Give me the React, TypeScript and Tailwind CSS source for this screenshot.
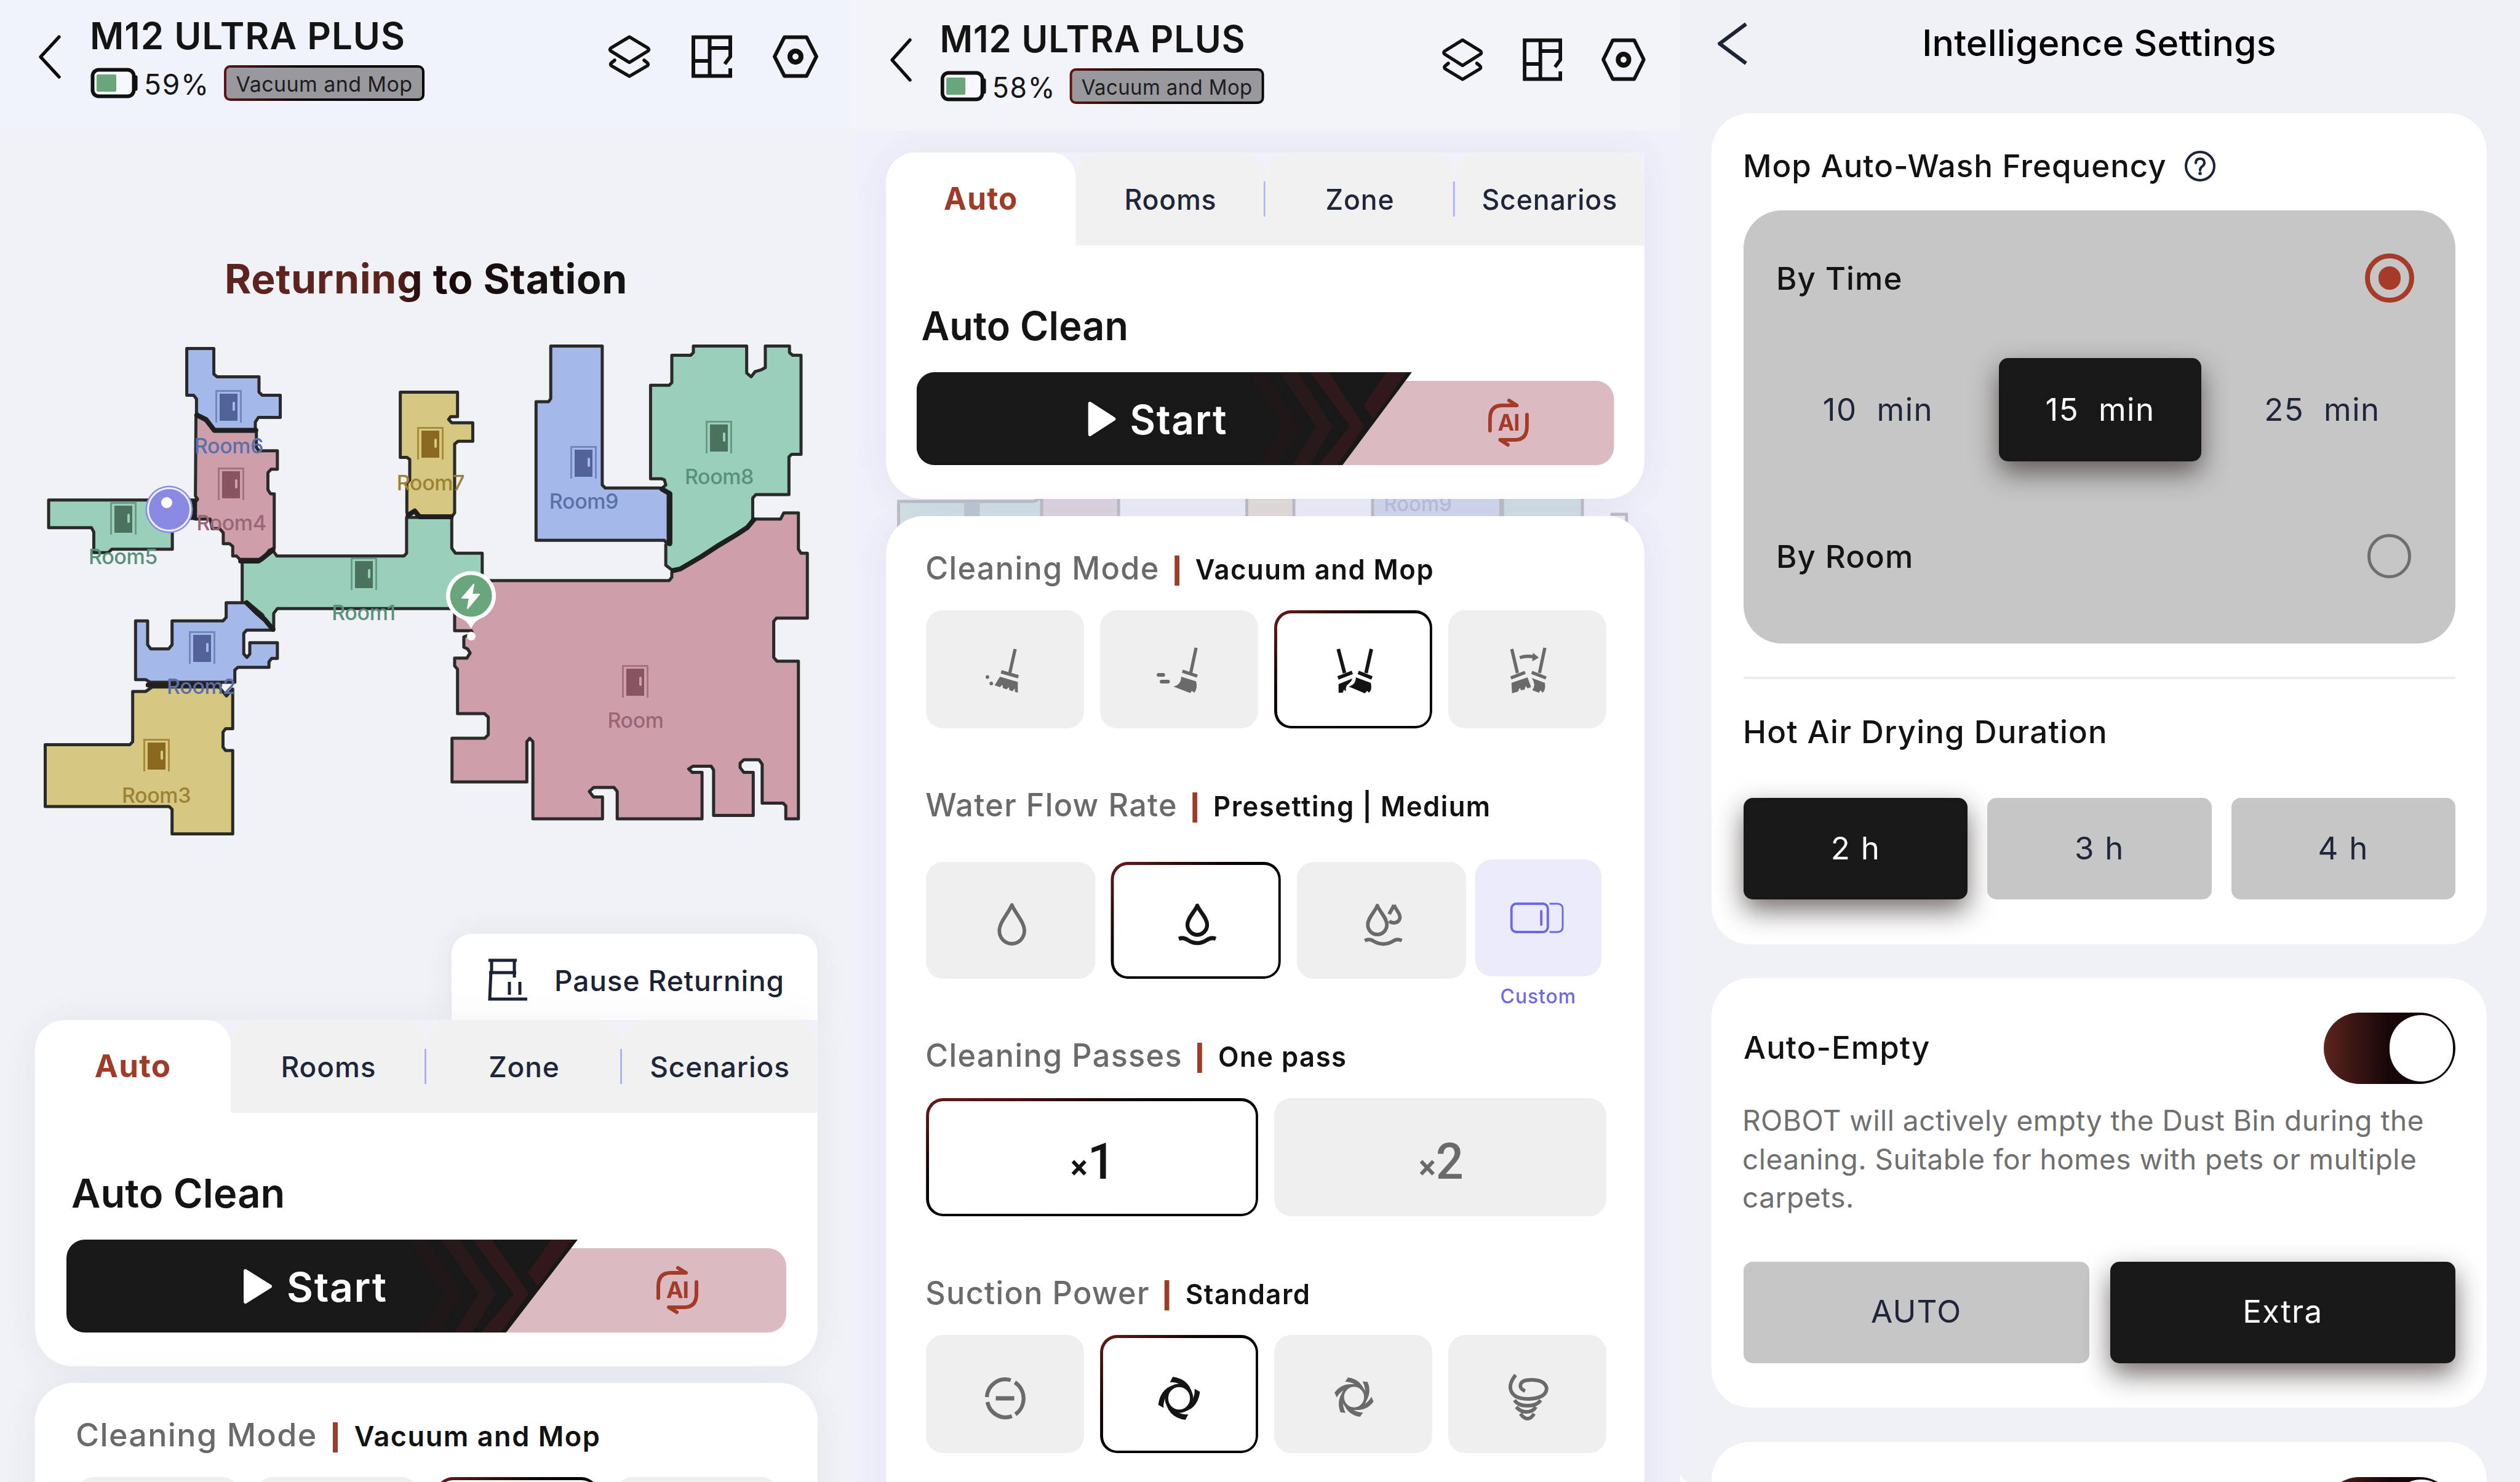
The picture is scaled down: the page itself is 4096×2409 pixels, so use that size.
import type { ReactNode } from 'react'

const COLORS = {
  blue: { fill: '#a4b9e9', frame: '#7188bf', door: '#52639a', text: '#5b6fa9' },
  pink: { fill: '#ce9fab', frame: '#a57380', door: '#87545f', text: '#9a6577' },
  green: { fill: '#99cfbb', frame: '#6a9a86', door: '#4a725d', text: '#58917a' },
  yellow: { fill: '#d7c881', frame: '#a88c3c', door: '#8a6a20', text: '#9c8233' },
}

type RoomColor = keyof typeof COLORS

// Outlines are in raw map units, labels in screen pixels
const rooms: { color: RoomColor; d: string }[] = [
  { color: 'pink', d: 'M652 275L690 292L722 322H882V370L892 380H962V434H938L926 444V494L936 506H950V665L930 672L905 698H820L806 688H792V660L780 652H756V620L742 608H714L706 580H650V530L658 522L650 512Z' },
  { color: 'blue', d: 'M617 80H720V155L732 163H892V208L904 217H973V282H890L878 296V318H722L705 300L660 275L654 268V228L643 217H617Z' },
  { color: 'green', d: 'M91 524H650V578H562V668H332L318 678H263V618L254 605H91Z' },
  { color: 'green', d: 'M828 703H890L905 695L945 672L960 688H1444L1454 680V575H1626V665L1640 680H1742V745L1636 842H962L948 856V905L930 895L905 860L850 825H828Z' },
  { color: 'yellow', d: 'M1430 208H1648V280L1622 280L1614 288L1626 298H1706V352H1650L1637 360V562L1624 575H1505L1485 555L1460 570L1455 560V475L1466 465V405L1455 399H1430Z' },
  { color: 'blue', d: 'M2003 73H2199V480L2211 489H2420L2450 505V655L2435 642H1947V236H1995L2003 227Z' },
  { color: 'green', d: 'M2383 188H2454L2464 180V100H2536L2546 92V73H2749V152L2766 163L2781 148L2806 142L2820 136V73H2912V92L2924 100H2956V390H2920L2910 398V508H2784L2772 518V580L2751 605L2696 630L2646 655L2576 690L2496 728L2466 730L2441 715V655L2460 650V505L2426 490L2441 480L2436 465L2426 462H2383Z' },
  { color: 'pink', d: 'M1742 760H2454L2464 750V735L2496 728L2576 690L2646 655L2751 605L2776 580H2878L2890 562H2946V668L2956 680H2980V870H2862L2852 880V985L2864 996H2946V1458H2898V1420L2888 1412H2808V1298L2796 1285H2738L2724 1295V1308L2738 1322H2774V1448H2623V1315L2614 1304H2544L2528 1312L2542 1322H2579V1458H2256V1378L2244 1366H2166L2150 1378L2166 1394H2200V1458H1935V1232L1923 1222L1912 1232V1350H1627V1222H1751L1765 1212V1160L1751 1150H1648V1020L1637 1010V987H1684L1696 972L1686 960L1672 955V925L1706 915L1701 907H1637V842Z' },
  { color: 'blue', d: 'M422 878H468V948L480 960H548L561 948V878H755L767 868V825H845L900 860L945 905H845L834 915V975L846 985L857 975V942H962V988H940L930 998V1014H812L800 1022V1058H478L460 1050H422Z' },
  { color: 'yellow', d: 'M485 1072H740L768 1098L792 1078V1194H765L755 1204V1248L765 1258H792V1502H561V1430L550 1422H78V1241H400L411 1232V1085H460Z' },
]

const walls = [
  'M655 275L690 288L722 320H880',
  'M646 528V576',
  'M822 703H890L905 695L945 670',
  'M845 825L885 855L915 875L945 903',
  'M1460 568L1485 556L1503 573H1624',
  'M2426 492L2456 505V652',
  'M2470 730L2496 726L2576 690L2646 655L2711 625L2751 605L2776 582',
  'M470 1066H742',
]

const labels: { name: string; color: RoomColor; door: [number, number]; text: [number, number] }[] = [
  { name: 'Room6', color: 'blue', door: [350, 112], text: [372, 215] },
  { name: 'Room4', color: 'pink', door: [354, 238], text: [376, 340] },
  { name: 'Room5', color: 'green', door: [179, 294], text: [200, 395] },
  { name: 'Room1', color: 'green', door: [570, 384], text: [591, 486] },
  { name: 'Room2', color: 'blue', door: [307, 504], text: [327, 606] },
  { name: 'Room3', color: 'yellow', door: [233, 679], text: [254, 783] },
  { name: 'Room7', color: 'yellow', door: [678, 172], text: [700, 275] },
  { name: 'Room9', color: 'blue', door: [927, 203], text: [949, 305] },
  { name: 'Room8', color: 'green', door: [1147, 162], text: [1169, 265] },
  { name: 'Room', color: 'pink', door: [1011, 559], text: [1033, 661] },
]

function FloorMap() {
  return (
    <svg className="block h-[996px] w-[1385px] shrink-0 mt-[33px]" viewBox="0 0 1385 996">
      <g transform="translate(40.2 0) scale(0.42686 0.55489)" strokeLinejoin="round" strokeLinecap="round" fill="none">
        {rooms.map((room) => (
          <path key={room.d} d={room.d} fill={COLORS[room.color].fill} stroke="#2a2a2a" strokeWidth="5" vectorEffect="non-scaling-stroke" />
        ))}
        {walls.map((d) => (
          <path key={d} d={d} stroke="#1f1f1f" strokeWidth="8" vectorEffect="non-scaling-stroke" />
        ))}
      </g>
      {labels.map(({ name, color, door: [dx, dy], text: [tx, ty] }) => (
        <g key={name}>
          <path d={`M${dx + 1.5} ${dy + 53}V${dy + 1.5}H${dx + 41.5}V${dy + 53}`} fill="none" stroke={COLORS[color].frame} strokeWidth="3" />
          <rect x={dx + 7} y={dy + 6} width="29" height="44" fill={COLORS[color].door} />
          <rect x={dx + 28} y={dy + 19} width="4" height="15" rx="2" fill={COLORS[color].fill} />
          <text x={tx} y={ty} fill={COLORS[color].text} textAnchor="middle" className="font-['Inter'] text-[34px] font-medium tracking-[-0.4px]">
            {name}
          </text>
        </g>
      ))}
      {/* Robot */}
      <circle cx="275" cy="306" r="38.5" fill="#8a8ae4" />
      <circle cx="275" cy="306" r="34.5" fill="none" stroke="#eeeefc" strokeWidth="3" />
      <circle cx="271" cy="295" r="9" fill="#fff" />
      {/* Charging station */}
      <path d="M765.6 406.5A40 40 0 0 1 780 484C773 487 769 493 765.6 500C762 493 758 487 751 484A40 40 0 0 1 765.6 406.5Z" fill="#fff" />
      <circle cx="765.6" cy="446.5" r="34" fill="#6aa67b" />
      <path d="M770 428L751 450H763L760 467L779 444H767Z" fill="#fff" stroke="#fff" strokeWidth="2" strokeLinejoin="round" />
      <circle cx="766" cy="512" r="7" fill="#fff" />
    </svg>
  )
}

function ScreenHeader({ battery }: { battery: string }) {
  return (
    <div className="flex items-start">
      <svg className="ml-[60px] mt-[55px] h-[75px] w-[42px]" viewBox="0 0 42 75" fill="none" stroke="#0c0c0c" strokeWidth="5.5" strokeLinecap="round" strokeLinejoin="round">
        <path d="M36 5L6 37.5L36 70" />
      </svg>
      <div className="ml-[44px] mt-[28px] w-[842px]">
        <h1 className="text-[60px] leading-[60px] font-semibold tracking-[1px] text-[#141414]">M12 ULTRA PLUS</h1>
        <div className="mt-[18px] flex h-[58px] items-center">
          <svg className="h-[50px] w-[78px]" viewBox="0 0 78 50" fill="none">
            <rect x="4.5" y="3.5" width="67" height="43" rx="10" fill="#f7f8fc" stroke="#101010" strokeWidth="6" />
            <path d="M75 15V35" stroke="#101010" strokeWidth="5" strokeLinecap="round" />
            <rect x="11" y="11" width="32" height="28" rx="2" fill="#68a67c" />
          </svg>
          <span className="w-[130px] pt-[3px] pl-[10px] text-[46px] leading-[58px] tracking-[1.7px] text-[#151515]">{battery}</span>
          <div className="ml-[10px] h-[58px] w-[326px] rounded-[10px] bg-linear-to-r from-[#5f1512] via-[#140505] via-35% to-black p-[4px]">
            <div className="h-full rounded-[6px] bg-[#99989c] text-center text-[34px] leading-[53px] tracking-[0.4px] text-[#1d1d1f]">Vacuum and Mop</div>
          </div>
        </div>
      </div>
      <div className="mt-[57px] flex gap-[66px]">
        <svg className="h-[70px] w-[70px]" viewBox="0 0 70 70" fill="none" stroke="#111" strokeWidth="5.5" strokeLinecap="round" strokeLinejoin="round">
          <path d="M35 3L65 21Q68 23.6 65 26L35 44.5L5 26Q2 23.6 5 21Z" />
          <path d="M11 41L6 45Q3 47.5 6 50L35 67L64 50Q67 47.5 64 45L59 41" />
        </svg>
        <svg className="h-[70px] w-[66px]" viewBox="0 0 66 70" fill="none" stroke="#111" strokeWidth="6">
          <path d="M54 47L63 35V3.5H3V66.5H63V54" />
          <path d="M29.5 3V67M3 42H29.5M29.5 21H63" />
        </svg>
        <svg className="h-[70px] w-[74px]" viewBox="0 0 74 70" fill="none" stroke="#111" strokeWidth="6" strokeLinejoin="round">
          <path d="M19 3.5H55L71 35L55 66.5H19L3 35Z" />
          <circle cx="37" cy="35" r="9" strokeWidth="8" />
        </svg>
      </div>
    </div>
  )
}

const tabs = ['Rooms', 'Zone', 'Scenarios']

function AutoCleanCard() {
  return (
    <div className="relative ml-[57px] h-[563px] w-[1272px] rounded-tl-[48px] rounded-b-[62px] bg-white shadow-[0_4px_60px_rgba(70,70,130,0.07)]">
      <div className="grid h-[151px] grid-cols-4 rounded-tl-[48px] bg-[#f1f1fc]">
        <div className="flex items-center justify-center rounded-tl-[48px] rounded-tr-[40px] bg-white pb-[1px] text-[51px] font-bold tracking-[1.3px] text-[#a03b27]">Auto</div>
        {tabs.map((tab, i) => (
          <div key={tab} className="relative flex items-center justify-center rounded-t-[38px] bg-[#f1f1f1] pt-[1px] text-[46px] font-medium tracking-[0.9px] text-[#20263a]">
            {i > 0 && <span className="absolute -left-[3px] top-[47px] h-[57px] w-[3px] bg-[#aab2f2]" />}
            {tab}
          </div>
        ))}
      </div>
      <h2 className="mt-[95px] pl-[59px] text-[65px] leading-[72px] font-semibold tracking-[0.1px] text-[#141414]">Auto Clean</h2>
      <div className="mt-[39px] ml-[51px] flex items-end">
        <div className="relative z-10 flex h-[151px] w-[831px] items-center overflow-hidden rounded-l-[30px] bg-[#181818] pl-[286px] [clip-path:polygon(0_0,100%_0,86%_100%,0_100%)]">
          <svg className="absolute inset-0 h-full w-full" viewBox="0 0 831 151" fill="#341a1c">
            <path d="M557 0H585L644 88L606 151H572L614 88Z" opacity="0.3" />
            <path d="M609 0H640L698 88L660 151H630L670 88Z" opacity="0.6" />
            <path d="M660 0H692L751 88L706 151H674L727 88Z" opacity="0.85" />
            <path d="M788 0H822L766 76L750 54Z" opacity="0.9" />
          </svg>
          <svg className="relative h-[60px] w-[50px]" viewBox="0 0 50 60" fill="#fff" stroke="#fff" strokeWidth="6" strokeLinejoin="round">
            <path d="M5 5L45 30L5 55Z" />
          </svg>
          <span className="relative ml-[22px] pt-[2px] text-[66px] leading-[72px] font-semibold tracking-[1.7px] text-white">Start</span>
        </div>
        <div className="-ml-[140px] flex h-[137px] w-[479px] items-center justify-center rounded-[30px] bg-[#dbbac1] pl-[125px] pb-[2px]">
          <svg className="h-[80px] w-[70px]" viewBox="0 0 70 80" fill="none" stroke="#a33b28" strokeWidth="6" strokeLinecap="round" strokeLinejoin="round">
            <path d="M4 53V34Q4 12 24 12H49L36 4" />
            <path d="M66 27V46Q66 68 46 68H21L34 76" />
            <text x="35" y="53" textAnchor="middle" fill="#a33b28" stroke="none" className="font-['Inter'] text-[37px] font-bold tracking-[-1px]">AI</text>
          </svg>
        </div>
      </div>
    </div>
  )
}

function SectionTitle({ title, value, className }: { title: string; value: string; className: string }) {
  return (
    <div className={`-ml-[1px] flex h-[60px] items-center ${className}`}>
      <span className="text-[52px] leading-[60px] font-medium tracking-[1.35px] text-[#6a6a6a]">{title}</span>
      <span className="ml-[25px] mt-[7px] h-[49px] w-[8px] bg-[#a03b27]" />
      <span className="ml-[27px] pt-[3px] text-[45px] leading-[60px] font-semibold tracking-[1.55px] text-[#121212]">{value}</span>
    </div>
  )
}

function Option({ selected, className, children }: { selected?: boolean; className: string; children: ReactNode }) {
  if (selected) {
    return (
      <div className={`rounded-[28px] bg-linear-to-br from-[#6b1d1a] via-[#0d0303] via-35% to-black p-[4.5px] ${className}`}>
        <div className="flex h-full items-center justify-center rounded-[23.5px] bg-white text-[#141414]">{children}</div>
      </div>
    )
  }
  return <div className={`flex items-center justify-center rounded-[28px] bg-[#efefef] text-[#6a6a6a] ${className}`}>{children}</div>
}

// Every mode glyph is drawn on the full 264x192 tile so strokes keep their place
function TileIcon({ children }: { children: ReactNode }) {
  return (
    <svg className="-ml-[2px] h-[192px] w-[264px] shrink-0" viewBox="0 0 264 192" fill="currentColor" stroke="none">
      {children}
    </svg>
  )
}

const line = { fill: 'none', stroke: 'currentColor' }

function SweepIcon() {
  return (
    <TileIcon>
      <path d="M149.5 63L140.5 102M126 100L155 108" {...line} strokeWidth="5.5" />
      <path d="M124 108L154 116.5L154 134L149 132.5V127L145 131.5L140 130L139 125L135 128.5L129 126.5L128 121L124 125L115 122Z" />
      <circle cx="103" cy="108.5" r="3" />
      <circle cx="109.5" cy="119" r="3" />
    </TileIcon>
  )
}

function MopIcon() {
  return (
    <TileIcon>
      <path d="M161 61L152 102M138 99L163 107" {...line} strokeWidth="5.5" />
      <path d="M136 108L161 115.5Q164 127 158 134L154 131L151 134.5L123 124Q136 121 136 108Z" />
      <path d="M98 105H106M103 116H114" {...line} strokeWidth="6" strokeLinecap="round" />
    </TileIcon>
  )
}

function VacuumMopIcon() {
  return (
    <TileIcon>
      <path d="M107.5 63L118 102M163 63L154 102M107 110L131 101M141 101L164 110" {...line} strokeWidth="6" />
      <path d="M108 120L131 111Q130 116 122 122Q119 127 121 132L117 129L115 134H108Z" />
      <path d="M137 109L162 118Q165 129 159 134L156 131L152 135L125 124Q137 121 137 109Z" />
    </TileIcon>
  )
}

function VacuumThenMopIcon() {
  return (
    <TileIcon>
      <path d="M106.5 63L116 102M162 61L153 102M105 110L129 101M140 101L164 110" {...line} strokeWidth="5.5" />
      <path d="M106 118L133 109L139 125L133 127L130 123L128 129L122 130L120 126L117 132L107 135Z" />
      <path d="M140 110L162 118Q164 130 158 134L155 130L152 134L141 130Q148 121 140 110Z" />
      <path d="M120 77Q132 73 144 76" {...line} strokeWidth="5.5" />
      <path d="M142 69L152 77L141 83Z" />
    </TileIcon>
  )
}

function DropIcon() {
  return (
    <svg className="h-[190px] w-[283px] shrink-0" viewBox="0 0 283 190" {...line} strokeWidth="6" strokeLinejoin="round">
      <path d="M143 70C137 84 122 98 122 112A21 21 0 0 0 164 112C164 98 149 84 143 70Z" />
    </svg>
  )
}

function DropWaveIcon() {
  return (
    <svg className="h-[190px] w-[283px] shrink-0" viewBox="0 0 283 190" {...line} strokeWidth="6.5" strokeLinejoin="round">
      <path d="M144 71C140 81 127.5 91 127.5 102A16.5 16.5 0 0 0 160.5 102C160.5 91 148 81 144 71Z" />
      <path d="M113 125Q121 122 128 127Q144 137 160 127Q167 122 175 125" />
    </svg>
  )
}

function DropsWaveIcon() {
  return (
    <svg className="h-[190px] w-[283px] shrink-0" viewBox="0 0 283 190" {...line} strokeWidth="6" strokeLinejoin="round">
      <path d="M134 71C130 81 118 91 118 102A16 16 0 0 0 150 102C150 91 138 81 134 71Z" />
      <path d="M162 70C159 77 156 80 154 85M162 70C165 78 172 83 172 90Q171 99 161 99Q157 99 154 96" />
      <path d="M113 128Q121 124 128 129Q144 138 160 129Q167 124 175 128" />
    </svg>
  )
}

function QuietIcon() {
  return (
    <TileIcon>
      <path d="M102 101A31 31 0 0 1 142 73.5M149 77A31 31 0 0 1 150 129M144 132A31 31 0 0 1 103 109" {...line} strokeWidth="6.5" />
      <rect x="117" y="99.5" width="31" height="7" />
    </TileIcon>
  )
}

const fourTurns = [0, 90, 180, 270]
const sixTurns = [0, 60, 120, 180, 240, 300]

function StandardIcon() {
  return (
    <TileIcon>
      <circle cx="132.5" cy="103" r="21" {...line} strokeWidth="5.5" />
      {fourTurns.map((a) => (
        <path key={a} transform={`rotate(${a} 132.5 103)`} d="M117 77L122 68Q153 72 156 104Q150 83 134 80Q124 76 117 77Z" />
      ))}
    </TileIcon>
  )
}

function StrongIcon() {
  return (
    <TileIcon>
      <circle cx="134" cy="101" r="19" {...line} strokeWidth="4.5" />
      {sixTurns.map((a) => (
        <path key={a} transform={`rotate(${a} 134 101)`} d="M119 76L124 69Q148 72 154.5 99Q149 84 135 80Q127 76 119 76Z" />
      ))}
    </TileIcon>
  )
}

function MaxIcon() {
  return (
    <TileIcon>
      <g {...line} strokeWidth="6">
        <path d="M113 65Q104 76 104 85Q106 104 134 104Q164 103 165 87Q163 73 139 73Q121 73 121 83Q121 88 129 91" />
        <path d="M111 106Q117 115 133 115Q149 115 155 106M114 117Q121 125 131 125Q142 125 147 117M121 128Q127 136 133 136Q139 136 144 128" />
      </g>
    </TileIcon>
  )
}

function Passes({ count }: { count: number }) {
  return (
    <div className="flex items-baseline pt-[16px] pl-[3px] font-['Roboto'] font-medium">
      <span className="text-[54px] font-bold">×</span>
      <span className="text-[82px] leading-[96px]">{count}</span>
    </div>
  )
}

function CleaningModeSection() {
  return (
    <>
      <SectionTitle className="mt-[55px]" title="Cleaning Mode" value="Vacuum and Mop" />
      <div className="mt-[38px] flex gap-[27px]">
        <Option className="h-[192px] w-[265px]"><SweepIcon /></Option>
        <Option className="h-[192px] w-[265px]"><MopIcon /></Option>
        <Option selected className="h-[192px] w-[265px]"><VacuumMopIcon /></Option>
        <Option className="h-[192px] w-[265px]"><VacuumThenMopIcon /></Option>
      </div>
    </>
  )
}

function SettingsCard({ collapsed }: { collapsed?: boolean }) {
  return (
    <div className="relative ml-[57px] flow-root h-[1700px] w-[1272px] rounded-t-[62px] bg-white pl-[67px] shadow-[0_0_60px_rgba(70,70,130,0.07)]">
      <CleaningModeSection />
      {!collapsed && (
        <>
          <SectionTitle className="mt-[95px]" title="Water Flow Rate" value="Presetting | Medium" />
          <div className="mt-[58px] flex h-[247px] items-start">
            <Option className="mt-[4px] h-[190px] w-[284px]"><DropIcon /></Option>
            <Option selected className="mt-[4px] ml-[26px] h-[190px] w-[285px]"><DropWaveIcon /></Option>
            <Option className="mt-[4px] ml-[27px] h-[190px] w-[284px]"><DropsWaveIcon /></Option>
            <div className="ml-[15px] w-[212px] text-center text-[33px] leading-[40px] font-medium tracking-[0.9px] text-[#6b68ee]">
              <div className="flex h-[190px] items-center justify-center rounded-[28px] bg-[#ebebfa] pr-[5px]">
                <svg className="h-[52px] w-[92px]" viewBox="0 0 92 52" {...line} strokeWidth="4" strokeLinecap="round">
                  <rect x="3" y="3" width="61" height="46" rx="8" />
                  <path d="M68 3H80Q89 3 89 12V40Q89 49 80 49H68" strokeWidth="3" />
                  <path d="M53 15V37" />
                </svg>
              </div>
              <p className="mt-[12px]">Custom</p>
            </div>
          </div>
          <SectionTitle className="mt-[42px]" title="Cleaning Passes" value="One pass" />
          <div className="mt-[39px] flex gap-[27px]">
            <Option selected className="h-[192px] w-[557px]"><Passes count={1} /></Option>
            <Option className="h-[192px] w-[557px]"><Passes count={2} /></Option>
          </div>
          <SectionTitle className="mt-[95px]" title="Suction Power" value="Standard" />
          <div className="mt-[38px] flex gap-[27px]">
            <Option className="h-[192px] w-[265px]"><QuietIcon /></Option>
            <Option selected className="h-[192px] w-[265px]"><StandardIcon /></Option>
            <Option className="h-[192px] w-[265px]"><StrongIcon /></Option>
            <Option className="h-[192px] w-[265px]"><MaxIcon /></Option>
          </div>
        </>
      )}
    </div>
  )
}

function MapScreen() {
  return (
    <section className="h-full w-[1385px] shrink-0 overflow-hidden bg-[#f0f2f6]">
      <div className="h-[208px] bg-[#f0f3fb]">
        <ScreenHeader battery="59%" />
      </div>
      <p className="mt-[209px] text-center text-[66px] leading-[72px] font-bold tracking-[0.7px]">
        <span className="bg-linear-to-r from-[#5e231d] from-42% via-[#1b090c] via-50% to-[#151515] bg-clip-text text-transparent">Returning to Station</span>
      </p>
      <FloorMap />
      <div className="ml-[734px] flex h-[140px] w-[595px] items-center rounded-t-[32px] bg-white pt-[9px] pl-[59px] shadow-[0_0_50px_rgba(70,70,130,0.08)]">
        <svg className="h-[72px] w-[66px]" viewBox="0 0 66 72" fill="none" stroke="#1c2236" strokeWidth="5">
          <path d="M1 4H47M6 4V24M43 4V32M2 24H46M5 22L3 67H64M35 39V60M52 39V60" />
        </svg>
        <span className="ml-[42px] pt-[2px] text-[46px] leading-[60px] font-medium tracking-[0.9px] text-[#1c2236]">Pause Returning</span>
      </div>
      <AutoCleanCard />
      <div className="h-[27px]" />
      <SettingsCard collapsed />
    </section>
  )
}

function CleaningScreen() {
  return (
    <section className="h-full w-[1346px] shrink-0 overflow-hidden bg-[#eff0fa]">
      {/* the sheet is laid out on the same grid as the map screen, then fitted to this narrower column */}
      <div className="relative w-[1389px] origin-left scale-x-[0.969]">
        <div className="h-[213px] bg-[#f3f4fa] pt-[5px] pl-[1px]">
          <ScreenHeader battery="58%" />
        </div>
        <div className="h-[35px]" />
        <svg className="absolute left-0 top-[800px] h-[80px] w-[1389px]" viewBox="0 0 1389 80" stroke="#bdbfc8" strokeWidth="5">
          <path d="M78 80V15H306L318 8V50" fill="#d3e3e6" />
          <path d="M318 -5V50H447V-5" fill="#e0d7e3" />
          <path d="M662 -5V50H741V-5" fill="#e5e0db" />
          <path d="M873 -5V50H1088V-5" fill="#d4daee" />
          <path d="M1091 -5V50H1225V-5" fill="#d2e2e7" />
          <path d="M1272 36H1299V60" fill="none" />
          <rect x="188" y="18" width="26" height="40" fill="#bccbd3" stroke="none" />
          <text x="949" y="31" textAnchor="middle" fill="#b9c0de" stroke="none" className="font-['Inter'] text-[34px] font-medium">Room9</text>
        </svg>
        <AutoCleanCard />
        <div className="h-[28px]" />
        <SettingsCard />
      </div>
    </section>
  )
}

function Toggle() {
  return (
    <div className="flex h-[116px] w-[214px] items-center justify-end rounded-full bg-linear-to-r from-[#5c241d] via-[#170709] via-50% to-[#140507] pr-[4px]">
      <div className="h-[108px] w-[103px] rounded-full bg-white" />
    </div>
  )
}

function Choice({ active, plain, children, className = '' }: { active?: boolean; plain?: boolean; children: ReactNode; className?: string }) {
  return (
    <div
      className={`flex items-center justify-center rounded-[15px] text-[51px] whitespace-pre ${className} ${
        active ? 'bg-[#181818] text-white shadow-[0_18px_44px_rgba(45,32,32,0.65)]' : 'text-[#20263a]'
      } ${active || plain ? '' : 'bg-[#c6c6c6]'}`}
    >
      {children}
    </div>
  )
}

function IntelligenceScreen() {
  return (
    <section className="h-full flex-1 overflow-hidden rounded-bl-[16px] bg-[#f0f1f6] pl-[51px]">
      <div className="relative flex h-[184px] w-[1260px] justify-center">
        <svg className="absolute left-[6px] top-[34px] h-[74px] w-[52px]" viewBox="0 0 52 74" fill="none" stroke="#1e2438" strokeWidth="6">
          <path d="M50 5L7 37L50 69" strokeLinejoin="round" />
        </svg>
        <h1 className="pt-[34px] text-[59px] leading-[72px] font-medium tracking-[0.2px] text-black">Intelligence Settings</h1>
      </div>

      <div className="h-[1351px] w-[1260px] rounded-[62px] bg-white pr-[51px] pl-[52px]">
        <div className="flex items-center gap-[28px] pt-[56px] text-[51px] leading-[60px] font-medium tracking-[1px] text-[#121212]">
          <span className="-ml-[1px]">Mop Auto-Wash Frequency</span>
          <svg className="-mt-[1px] h-[52px] w-[52px]" viewBox="0 0 52 52" fill="none" stroke="#1e2438" strokeWidth="4">
            <circle cx="26" cy="26" r="23" />
            <path d="M19 21Q19 14 26 14Q33 14 33 21Q33 24 29 27Q26 29 26 33" strokeLinecap="round" />
            <circle cx="26" cy="38" r="1.5" strokeWidth="2.5" />
          </svg>
        </div>

        <div className="mt-[42px] h-[704px] rounded-[62px] bg-[#c6c6c6] px-[53px] text-[51px] leading-[60px] font-medium tracking-[1.1px] text-[#141414]">
          <div className="flex h-[240px] items-center justify-between pr-[14px] pb-[21px]">
            <span className="pt-[2px]">By Time</span>
            <span className="flex h-[80px] w-[80px] items-center justify-center rounded-full border-[8px] border-[#a63c28]">
              <span className="h-[38px] w-[36px] rounded-full bg-[#a63c28]" />
            </span>
          </div>
          <div className="-ml-[15px] grid w-[1083px] grid-cols-3 font-normal tracking-[1.5px]">
            <Choice plain className="h-[168px]">{'10  min'}</Choice>
            <Choice active className="mx-[16px] h-[168px]">{'15  min'}</Choice>
            <Choice plain className="h-[168px]">{'25  min'}</Choice>
          </div>
          <div className="flex items-center justify-between pt-[118px] pr-[19px]">
            <span className="pt-[2px]">By Room</span>
            <span className="h-[72px] w-[71px] rounded-full border-[5px] border-[#6e6e6e]" />
          </div>
        </div>

        <div className="mt-[54px] h-[4px] bg-[#ececf3]" />
        <h2 className="-ml-[1px] mt-[56px] text-[51px] leading-[60px] font-medium tracking-[1.2px] text-[#121212]">Hot Air Drying Duration</h2>
        <div className="mt-[77px] grid grid-cols-3 gap-[32px] tracking-[1.7px]">
          <Choice active className="h-[165px] pb-[1px]">2 h</Choice>
          <Choice className="h-[165px] pb-[1px]">3 h</Choice>
          <Choice className="h-[165px] pb-[1px]">4 h</Choice>
        </div>
      </div>

      <div className="mt-[55px] h-[698px] w-[1260px] rounded-[62px] bg-white pr-[51px] pl-[52px]">
        <div className="flex items-center justify-between pt-[56px]">
          <h2 className="pb-[3px] text-[51px] leading-[60px] font-medium tracking-[1px] text-[#121212]">Auto-Empty</h2>
          <Toggle />
        </div>
        <p className="-mx-[2px] mt-[28px] text-[46px] leading-[62.5px] tracking-[0.5px] text-[#6f6f6f]">
          ROBOT will actively empty the Dust Bin during the
          <br />
          cleaning. Suitable for homes with pets or multiple
          <br />
          carpets.
        </p>
        <div className="mt-[73px] grid grid-cols-2 gap-[34px] tracking-[1.2px]">
          <Choice className="h-[165px] pb-[1px]">AUTO</Choice>
          <Choice active className="h-[165px] pb-[1px]">Extra</Choice>
        </div>
      </div>

      <div className="mt-[56px] flex h-[400px] w-[1260px] justify-end rounded-[62px] bg-white px-[51px] pt-[57px]">
        <Toggle />
      </div>
    </section>
  )
}

export default function App() {
  return (
    <main className="flex h-[2409px] w-[4096px] overflow-hidden bg-white font-['Inter',sans-serif]">
      <MapScreen />
      <CleaningScreen />
      <IntelligenceScreen />
    </main>
  )
}
